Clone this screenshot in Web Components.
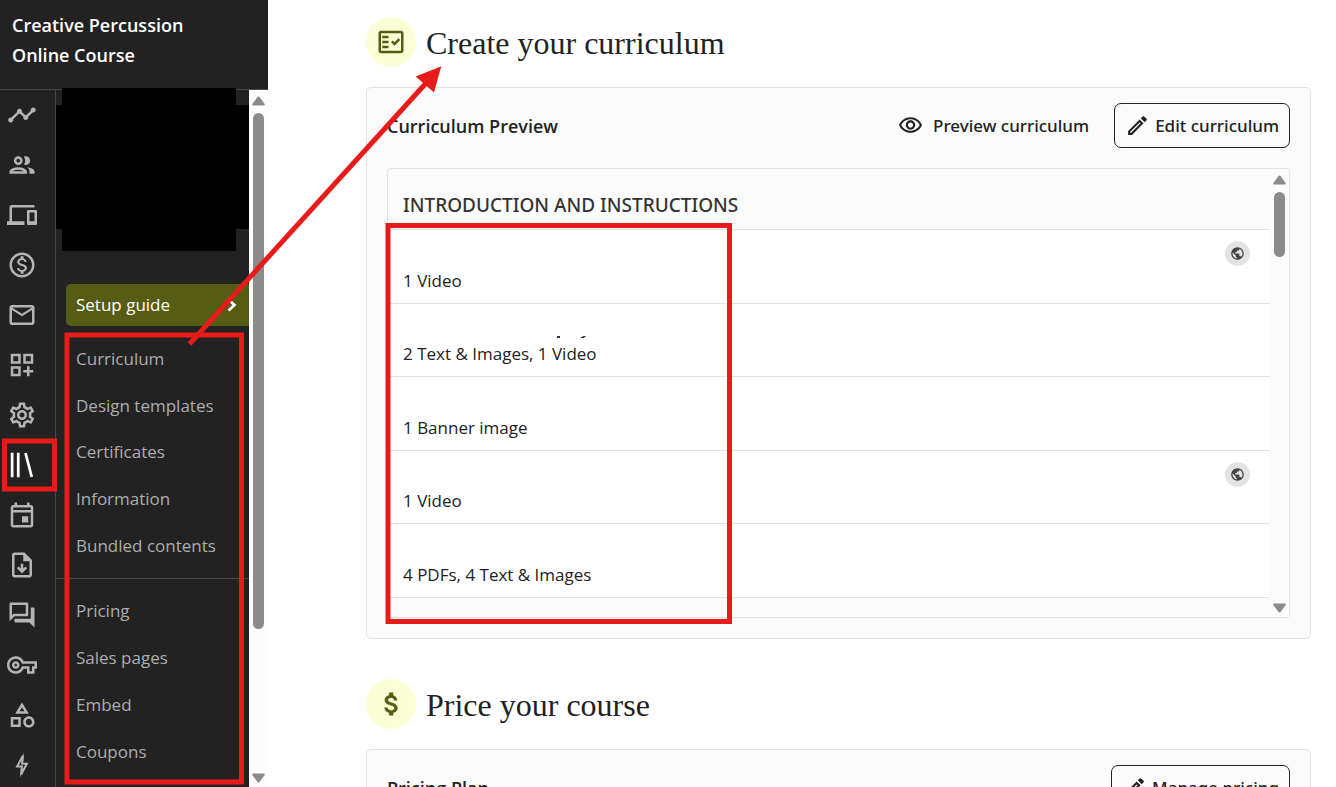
<!DOCTYPE html>
<html lang="en">
<head>
<meta charset="utf-8">
<meta name="viewport" content="width=device-width, initial-scale=1">
<title>Creative Percussion Online Course</title>
<style>
  body{
    margin: 0;
    background: #fff;
    color: #222;
    font-family: "Open Sans", "Noto Sans", sans-serif;
    font-size: 17px;
    line-height: 24px;
  }
</style>
</head>
<body>
<course-app>
  <course-sidebar slot="side" heading="Creative Percussion" subheading="Online Course"></course-sidebar>

  <setup-step icon="factCheck" heading="Create your curriculum">
    <setup-card heading="Curriculum Preview">
      <action-button slot="actions" icon="eye" plain>Preview curriculum</action-button>
      <action-button slot="actions" icon="pencil">Edit curriculum</action-button>
      <curriculum-list heading="INTRODUCTION AND INSTRUCTIONS">
        <curriculum-row public>1 Video</curriculum-row>
        <curriculum-row trace>2 Text &amp; Images, 1 Video</curriculum-row>
        <curriculum-row>1 Banner image</curriculum-row>
        <curriculum-row public>1 Video</curriculum-row>
        <curriculum-row>4 PDFs, 4 Text &amp; Images</curriculum-row>
      </curriculum-list>
    </setup-card>
  </setup-step>

  <setup-step icon="dollar" heading="Price your course">
    <setup-card heading="Pricing Plan">
      <action-button slot="actions" icon="pencil">Manage pricing</action-button>
    </setup-card>
  </setup-step>

  <markup-layer slot="overlay"></markup-layer>
</course-app>

<script>
const ICONS = {
  timeline: '<path d="M23 8c0 1.1-.9 2-2 2-.18 0-.35-.02-.51-.07l-3.56 3.55c.05.16.07.34.07.52 0 1.1-.9 2-2 2s-2-.9-2-2c0-.18.02-.36.07-.52l-2.55-2.55c-.16.05-.34.07-.52.07s-.36-.02-.52-.07l-4.55 4.56c.05.16.07.33.07.51 0 1.1-.9 2-2 2s-2-.9-2-2 .9-2 2-2c.18 0 .35.02.51.07l4.56-4.55C8.02 9.36 8 9.18 8 9c0-1.1.9-2 2-2s2 .9 2 2c0 .18-.02.36-.07.52l2.55 2.55c.16-.05.34-.07.52-.07s.36.02.52.07l3.55-3.56C19.02 8.35 19 8.18 19 8c0-1.1.9-2 2-2s2 .9 2 2z"/>',
  people: '<path d="M9 13.75c-2.34 0-7 1.17-7 3.5V19h14v-1.75c0-2.33-4.66-3.5-7-3.5zM4.34 17c.84-.58 2.87-1.25 4.66-1.25s3.82.67 4.66 1.25H4.34zM9 12c1.93 0 3.5-1.57 3.5-3.5S10.93 5 9 5 5.5 6.57 5.5 8.5 7.07 12 9 12zm0-5c.83 0 1.5.67 1.5 1.5S9.83 10 9 10s-1.5-.67-1.5-1.5S8.17 7 9 7zm7.04 6.81c1.16.84 1.96 1.96 1.96 3.44V19h4v-1.75c0-2.02-3.5-3.17-5.96-3.44zM15 12c1.93 0 3.5-1.57 3.5-3.5S16.93 5 15 5c-.54 0-1.04.13-1.5.35.63.89 1 1.98 1 3.15s-.37 2.26-1 3.15c.46.22.96.35 1.5.35z"/>',
  devices: '<path d="M4 6h18V4H4c-1.1 0-2 .9-2 2v11H0v3h14v-3H4V6zm19 2h-6c-.55 0-1 .45-1 1v10c0 .55.45 1 1 1h6c.55 0 1-.45 1-1V9c0-.55-.45-1-1-1zm-1 9h-4v-7h4v7z"/>',
  money: '<path d="M12 2C6.48 2 2 6.48 2 12s4.48 10 10 10 10-4.48 10-10S17.52 2 12 2zm0 18c-4.41 0-8-3.59-8-8s3.59-8 8-8 8 3.59 8 8-3.59 8-8 8zm.31-8.86c-1.77-.45-2.34-.94-2.34-1.67 0-.84.79-1.43 2.1-1.43 1.38 0 1.9.66 1.94 1.64h1.71c-.05-1.34-.87-2.57-2.49-2.97V5H10.9v1.69c-1.51.32-2.72 1.3-2.72 2.81 0 1.79 1.49 2.69 3.66 3.21 1.95.46 2.34 1.15 2.34 1.87 0 .53-.39 1.39-2.1 1.39-1.6 0-2.23-.72-2.32-1.64H8.04c.1 1.7 1.36 2.66 2.86 2.97V19h2.34v-1.67c1.52-.29 2.72-1.16 2.73-2.77-.01-2.2-1.9-2.96-3.66-3.42z"/>',
  mail: '<path d="M22 6c0-1.1-.9-2-2-2H4c-1.1 0-2 .9-2 2v12c0 1.1.9 2 2 2h16c1.1 0 2-.9 2-2V6zm-2 0l-8 5-8-5h16zm0 12H4V8l8 5 8-5v10z"/>',
  widgets: '<path d="M3 11h8V3H3v8zm2-6h4v4H5V5zm8-2v8h8V3h-8zm6 6h-4V5h4v4zM3 21h8v-8H3v8zm2-6h4v4H5v-4zm13-2h-2v3h-3v2h3v3h2v-3h3v-2h-3v-3z"/>',
  gear: '<path d="M19.43 12.98c.04-.32.07-.64.07-.98 0-.34-.03-.66-.07-.98l2.11-1.65c.19-.15.24-.42.12-.64l-2-3.46c-.09-.16-.26-.25-.44-.25-.06 0-.12.01-.17.03l-2.49 1c-.52-.4-1.08-.73-1.69-.98l-.38-2.65C14.46 2.18 14.25 2 14 2h-4c-.25 0-.46.18-.49.42l-.38 2.65c-.61.25-1.17.59-1.69.98l-2.49-1c-.06-.02-.12-.03-.18-.03-.17 0-.34.09-.43.25l-2 3.46c-.13.22-.07.49.12.64l2.11 1.65c-.04.32-.07.65-.07.98 0 .33.03.66.07.98l-2.11 1.65c-.19.15-.24.42-.12.64l2 3.46c.09.16.26.25.44.25.06 0 .12-.01.17-.03l2.49-1c.52.4 1.08.73 1.69.98l.38 2.65c.03.24.24.42.49.42h4c.25 0 .46-.18.49-.42l.38-2.65c.61-.25 1.17-.59 1.69-.98l2.49 1c.06.02.12.03.18.03.17 0 .34-.09.43-.25l2-3.46c.12-.22.07-.49-.12-.64l-2.11-1.65zm-1.98-1.71c.04.31.05.52.05.73 0 .21-.02.43-.05.73l-.14 1.13.89.7 1.08.84-.7 1.21-1.27-.51-1.04-.42-.9.68c-.43.32-.84.56-1.25.73l-1.06.43-.16 1.13-.2 1.35h-1.4l-.19-1.35-.16-1.13-1.06-.43c-.43-.18-.83-.41-1.23-.71l-.91-.7-1.06.43-1.27.51-.7-1.21 1.08-.84.89-.7-.14-1.13c-.03-.31-.05-.54-.05-.74s.02-.43.05-.73l.14-1.13-.89-.7-1.08-.84.7-1.21 1.27.51 1.04.42.9-.68c.43-.32.84-.56 1.25-.73l1.06-.43.16-1.13.2-1.35h1.39l.19 1.35.16 1.13 1.06.43c.43.18.83.41 1.23.71l.91.7 1.06-.43 1.27-.51.7 1.21-1.07.85-.89.7.14 1.13zM12 8c-2.21 0-4 1.79-4 4s1.79 4 4 4 4-1.79 4-4-1.79-4-4-4zm0 6c-1.1 0-2-.9-2-2s.9-2 2-2 2 .9 2 2-.9 2-2 2z"/>',
  library: '<path fill="none" stroke="currentColor" stroke-width="2.2" d="M4.1 2.200v19.600M9 2.200v19.600M14.800 2.400l5 19.200"/>',
  calendar: '<path d="M19 4h-1V2h-2v2H8V2H6v2H5c-1.11 0-1.99.9-1.99 2L3 20c0 1.1.89 2 2 2h14c1.1 0 2-.9 2-2V6c0-1.1-.9-2-2-2zm0 16H5V10h14v10zm0-12H5V6h14v2zm-7 5h5v5h-5v-5z"/>',
  download: '<path d="M14 2H6c-1.1 0-2 .9-2 2v16c0 1.1.9 2 2 2h12c1.1 0 2-.9 2-2V8l-6-6zM6 20V4h7v5h5v11H6z"/><path fill="none" stroke="currentColor" stroke-width="2" d="M12 11v6M8.6 13.9L12 17.3l3.4-3.4"/>',
  forum: '<path d="M15 4v7H5.17L4 12.17V4h11m1-2H3c-.55 0-1 .45-1 1v14l4-4h10c.55 0 1-.45 1-1V3c0-.55-.45-1-1-1zm5 4h-2v9H6v2c0 .55.45 1 1 1h11l4 4V7c0-.55-.45-1-1-1z"/>',
  key: '<path d="M22 19h-6v-4h-2.68c-1.14 2.42-3.6 4-6.32 4-3.86 0-7-3.14-7-7s3.14-7 7-7c2.72 0 5.17 1.58 6.32 4H24v6h-2v4zm-4-2h2v-4h2v-2H11.94l-.23-.67C11.01 8.34 9.11 7 7 7c-2.76 0-5 2.24-5 5s2.24 5 5 5c2.11 0 4.01-1.34 4.71-3.33l.23-.67H18v4zM7 15c-1.65 0-3-1.35-3-3s1.35-3 3-3 3 1.35 3 3-1.35 3-3 3zm0-4c-.55 0-1 .45-1 1s.45 1 1 1 1-.45 1-1-.45-1-1-1z"/>',
  shapes: '<path d="M12 2l-5.5 9h11L12 2zm0 3.84L13.93 9h-3.87L12 5.84zM17.5 13c-2.49 0-4.5 2.01-4.5 4.5s2.01 4.5 4.5 4.5 4.5-2.01 4.5-4.5-2.01-4.5-4.5-4.5zm0 7c-1.38 0-2.5-1.12-2.5-2.5s1.12-2.5 2.5-2.5 2.5 1.12 2.5 2.5-1.12 2.5-2.5 2.5zM3 21.5h8v-8H3v8zm2-6h4v4H5v-4z"/>',
  bolt: '<path fill="none" stroke="currentColor" stroke-width="1.6" d="M12.7 4.6L8.1 13.2h3.8l-.6 6.4 4.6-8.6h-3.8z"/><path d="M13.6 2l-1.6 4 .8 4zM10.4 22.2l1.7-4-.8-4z"/>',
  factCheck: '<path d="M20 3H4c-1.1 0-2 .9-2 2v14c0 1.1.9 2 2 2h16c1.1 0 2-.9 2-2V5c0-1.1-.9-2-2-2zm0 16H4V5h16v14z"/><path d="M19.41 10.42L17.99 9l-3.17 3.17-1.41-1.42L12 12.16 14.82 15zM5 7h5v2H5zM5 11h5v2H5zM5 15h5v2H5z"/>',
  dollar: '<path stroke="currentColor" stroke-width=".4" transform="translate(.6)" d="M11.8 10.9c-2.27-.59-3-1.2-3-2.15 0-1.09 1.01-1.85 2.7-1.85 1.78 0 2.44.85 2.5 2.1h2.21c-.07-1.72-1.12-3.3-3.21-3.81V3h-3v2.16c-1.94.42-3.5 1.68-3.5 3.61 0 2.31 1.91 3.46 4.7 4.13 2.5.6 3 1.48 3 2.41 0 .69-.49 1.79-2.7 1.79-2.06 0-2.87-.92-2.98-2.1h-2.2c.12 2.19 1.76 3.42 3.68 3.83V21h3v-2.15c1.95-.37 3.5-1.5 3.5-3.55 0-2.84-2.43-3.81-4.7-4.4z"/>',
  eye: '<path d="M12 6c3.79 0 7.17 2.13 8.82 5.5C19.17 14.87 15.79 17 12 17s-7.17-2.13-8.82-5.5C4.83 8.13 8.21 6 12 6m0-2C7 4 2.73 7.11 1 11.5 2.73 15.89 7 19 12 19s9.27-3.11 11-7.5C21.27 7.11 17 4 12 4zm0 5c1.38 0 2.5 1.12 2.5 2.5S13.38 14 12 14s-2.5-1.12-2.5-2.5S10.62 9 12 9m0-2c-2.48 0-4.5 2.02-4.5 4.5S9.52 16 12 16s4.5-2.02 4.5-4.5S14.48 7 12 7z"/>',
  pencil: '<path d="M14.06 9.02l.92.92L5.92 19H5v-.92l9.06-9.06M17.66 3c-.25 0-.51.1-.7.29l-1.83 1.83 3.75 3.75 1.83-1.83c.39-.39.39-1.02 0-1.41l-2.34-2.34c-.2-.2-.45-.29-.71-.29zm-3.6 3.19L3 17.25V21h3.75L17.81 9.94l-3.75-3.75z"/>',
  globe: '<path d="M12 2C6.48 2 2 6.48 2 12s4.48 10 10 10 10-4.48 10-10S17.52 2 12 2zm-1 17.93c-3.95-.49-7-3.85-7-7.93 0-.62.08-1.21.21-1.79L9 15v1c0 1.1.9 2 2 2v1.93zm6.9-2.54c-.26-.81-1-1.39-1.9-1.39h-1v-3c0-.55-.45-1-1-1H8v-2h2c.55 0 1-.45 1-1V7h2c1.1 0 2-.9 2-2v-.41c2.93 1.19 5 4.06 5 7.41 0 2.08-.8 3.97-2.1 5.39z"/>',
  chevron: '<path fill="none" stroke="currentColor" stroke-width="2.700" d="M8.500 6.500l6 5.500-6 5.500"/>'
}

class AppIcon extends HTMLElement {
  constructor(){
    super()
    this.attachShadow({mode: 'open'})
  }

  connectedCallback() {
    this.shadowRoot.innerHTML = `
      <style>
        :host{
          display: block;
          flex: none;
          width: var(--icon-size, 30px);
          height: var(--icon-size, 30px);
        }
        svg{
          display: block;
          width: 100%;
          height: 100%;
          fill: currentColor;
        }
      </style>
      <svg viewBox="0 0 24 24" aria-hidden="true">${ICONS[this.getAttribute('name')]}</svg>
    `
  }
}

class ScrollTrack extends HTMLElement {
  constructor(){
    super()
    this.attachShadow({mode: 'open'}).innerHTML = `
      <style>
        :host{
          display: flex;
          flex-direction: column;
          align-items: center;
          gap: 7px;
          flex: none;
          box-sizing: border-box;
          width: 19px;
          padding: 6px 0 4px;
          background: #fcfcfc;
          color: #8b8b8b;
        }
        svg{
          flex: none;
          width: 13px;
          height: 10px;
          fill: currentColor;
        }
        .track{
          flex: 1;
          width: 11px;
        }
        .thumb{
          height: var(--thumb, 50%);
          border-radius: 6px;
          background: currentColor;
        }
      </style>
      <svg viewBox="0 0 13 10" aria-hidden="true"><path d="M5.300 1.200q1.200-1.400 2.400 0l4.800 6.600q.8 1.700-.8 1.700H1.300q-1.600 0-.8-1.700z"/></svg>
      <div class="track"><div class="thumb"></div></div>
      <svg viewBox="0 0 13 10" aria-hidden="true"><path d="M5.300 8.800q1.200 1.400 2.400 0l4.800-6.600q.8-1.700-.8-1.700H1.300q-1.600 0-.8 1.700z"/></svg>
    `
  }
}

class SideRail extends HTMLElement {
  constructor(){
    super()
    const items = [
      ['timeline', 'Dashboard'], ['people', 'Users'], ['devices', 'Website'],
      ['money', 'Sales'], ['mail', 'Email'], ['widgets', 'Apps'],
      ['gear', 'Settings'], ['library', 'Products'], ['calendar', 'Events'],
      ['download', 'Downloads'], ['forum', 'Community'], ['key', 'Access'],
      ['shapes', 'Categories'], ['bolt', 'Automations']
    ]
    this.attachShadow({mode: 'open'}).innerHTML = `
      <style>
        :host{
          display: block;
          flex: none;
          box-sizing: border-box;
          width: 56px;
          border-right: 1px solid #484848;
          color: #b5b5b5;
        }
        a{
          display: flex;
          align-items: center;
          height: 50px;
          padding-left: 7px;
          color: inherit;
        }
        a[aria-current]{
          color: #fff;
        }
      </style>
      <nav aria-label="Main">
        ${items.map(([icon, label]) => `<a href="#${icon}" aria-label="${label}" ${icon === 'library' ? 'aria-current="page"' : ''}><app-icon name="${icon}"></app-icon></a>`).join('')}
      </nav>
    `
  }
}

class CourseNav extends HTMLElement {
  constructor(){
    super()
    const list = items => items.map(item => `<li><a href="#">${item}</a></li>`).join('')
    this.attachShadow({mode: 'open'}).innerHTML = `
      <style>
        :host{
          display: block;
          flex: 1;
          color: #adadad;
        }
        .cover{
          position: relative;
          height: 124px;
          margin: 15px 0 55px;
          background: #000;
        }
        .cover::after{
          content: "";
          position: absolute;
          inset: -17px 13px -22px 6px;
          background: #000;
        }
        a{
          color: inherit;
          text-decoration: none;
        }
        .current{
          display: flex;
          align-items: center;
          justify-content: space-between;
          height: 42px;
          margin: 0 0 10px 10px;
          padding: 0 5px 0 10px;
          border-radius: 5px 0 0 5px;
          background: #565c14;
          color: #fff;
          --icon-size: 24px;
        }
        ul{
          display: grid;
          grid-auto-rows: 1fr;
          align-items: center;
          margin: 0;
          padding: 0 0 0 20px;
          list-style: none;
        }
        .build{
          min-height: 233px;
        }
        .sell{
          min-height: 187px;
        }
        hr{
          margin: 9px 0;
          border: 0;
          border-top: 1px solid #484848;
        }
      </style>
      <div class="cover"></div>
      <nav aria-label="Course">
        <a class="current" href="#setup">Setup guide<app-icon name="chevron"></app-icon></a>
        <ul class="build">${list(['Curriculum', 'Design templates', 'Certificates', 'Information', 'Bundled contents'])}</ul>
        <hr>
        <ul class="sell">${list(['Pricing', 'Sales pages', 'Embed', 'Coupons'])}</ul>
      </nav>
    `
  }
}

class CourseSidebar extends HTMLElement {
  constructor(){
    super()
    this.attachShadow({mode: 'open'})
  }

  connectedCallback() {
    this.shadowRoot.innerHTML = `
      <style>
        :host{
          display: flex;
          flex-direction: column;
          width: 268px;
          height: 100%;
          background: #222;
        }
        header{
          flex: none;
          padding: 10px 12px 19px;
          border-bottom: 1px solid #484848;
          color: #fff;
          font-size: 18px;
          font-weight: 600;
          line-height: 30px;
        }
        .columns{
          display: flex;
          flex: 1;
          min-height: 0;
        }
        scroll-track{
          --thumb: 79%;
        }
      </style>
      <header>${this.getAttribute('heading')}<br>${this.getAttribute('subheading')}</header>
      <div class="columns">
        <side-rail></side-rail>
        <course-nav></course-nav>
        <scroll-track></scroll-track>
      </div>
    `
  }
}

class SetupStep extends HTMLElement {
  constructor(){
    super()
    this.attachShadow({mode: 'open'})
  }

  connectedCallback() {
    this.shadowRoot.innerHTML = `
      <style>
        :host{
          display: block;
        }
        header{
          display: flex;
          align-items: center;
          gap: 10px;
          height: 50px;
          margin-bottom: 20px;
        }
        .badge{
          display: grid;
          place-items: center;
          width: 50px;
          height: 50px;
          border-radius: 50%;
          background: #faffd6;
          color: #565c14;
        }
        h2{
          margin: 0;
          padding-top: 2px;
          font: 400 32px/50px "Liberation Serif", serif;
        }
      </style>
      <section>
        <header>
          <span class="badge"><app-icon name="${this.getAttribute('icon')}"></app-icon></span>
          <h2>${this.getAttribute('heading')}</h2>
        </header>
        <slot></slot>
      </section>
    `
  }
}

class SetupCard extends HTMLElement {
  constructor(){
    super()
    this.attachShadow({mode: 'open'})
  }

  connectedCallback() {
    this.shadowRoot.innerHTML = `
      <style>
        :host{
          display: block;
          padding: 15px 20px 20px;
          border: 1px solid #e3e3e3;
          border-radius: 5px;
          background: #fbfbfb;
        }
        header{
          display: flex;
          align-items: center;
          gap: 24px;
          margin-bottom: 20px;
        }
        h3{
          flex: 1;
          margin: 0;
          font-size: 18px;
          font-weight: 600;
        }
      </style>
      <header>
        <h3>${this.getAttribute('heading')}</h3>
        <slot name="actions"></slot>
      </header>
      <slot></slot>
    `
  }
}

class ActionButton extends HTMLElement {
  constructor(){
    super()
    this.attachShadow({mode: 'open'})
  }

  connectedCallback() {
    this.shadowRoot.innerHTML = `
      <style>
        :host{
          display: block;
          --icon-size: 25px;
        }
        button{
          display: flex;
          align-items: center;
          gap: 5px;
          height: 45px;
          padding: 0 10px;
          border: 1px solid #222;
          border-radius: 7px;
          background: none;
          color: inherit;
          font: 500 17px/24px "Noto Sans", sans-serif;
          white-space: nowrap;
        }
        :host([plain]) button{
          gap: 10px;
          padding: 0;
          border-color: transparent;
        }
      </style>
      <button type="button"><app-icon name="${this.getAttribute('icon')}"></app-icon><span><slot></slot></span></button>
    `
  }
}

class CurriculumList extends HTMLElement {
  constructor(){
    super()
    this.attachShadow({mode: 'open'})
  }

  connectedCallback() {
    this.shadowRoot.innerHTML = `
      <style>
        :host{
          display: flex;
          border: 1px solid #e3e3e3;
          border-radius: 4px;
          overflow: hidden;
        }
        .body{
          flex: 1;
          padding-bottom: 19px;
        }
        h4{
          margin: 0;
          padding: 24px 15px 12px;
          border-bottom: 1px solid #e3e3e3;
          color: #333;
          font: 500 19px/24px "Noto Sans", sans-serif;
        }
        .rows{
          display: grid;
          grid-auto-rows: 1fr;
          min-height: 368px;
        }
        scroll-track{
          --thumb: 16%;
        }
      </style>
      <div class="body">
        <h4>${this.getAttribute('heading')}</h4>
        <div class="rows" role="list"><slot></slot></div>
      </div>
      <scroll-track></scroll-track>
    `
  }
}

class CurriculumRow extends HTMLElement {
  constructor(){
    super()
    this.attachShadow({mode: 'open'})
  }

  connectedCallback() {
    this.setAttribute('role', 'listitem')
    this.shadowRoot.innerHTML = `
      <style>
        :host{
          display: flex;
          justify-content: space-between;
          padding: 11px 20px 10px 15px;
          border-bottom: 1px solid #e3e3e3;
          background: #fff;
          --icon-size: 15px;
        }
        .detail{
          position: relative;
          align-self: flex-end;
        }
        .trace{
          position: absolute;
          top: -6px;
          left: 154px;
          width: 32px;
          height: 3px;
        }
        .status{
          display: grid;
          place-items: center;
          width: 25px;
          height: 25px;
          border-radius: 50%;
          background: #e3e3e3;
          color: #444;
        }
      </style>
      <span class="detail">
        <slot></slot>
        ${this.hasAttribute('trace') ? '<svg class="trace" viewBox="0 0 32 3" fill="#333" aria-hidden="true"><path d="M0 0h3v2H0zM24 1l3-1h2l-2 2h-3z"/></svg>' : ''}
      </span>
      ${this.hasAttribute('public') ? '<span class="status"><app-icon name="globe"></app-icon></span>' : ''}
    `
  }
}

// Red boxes and pointer arrow drawn over the page
class MarkupLayer extends HTMLElement {
  constructor(){
    super()
    this.attachShadow({mode: 'open'}).innerHTML = `
      <style>
        :host{
          position: absolute;
          inset: 0;
          overflow: hidden;
          pointer-events: none;
        }
        svg{
          display: block;
          overflow: visible;
        }
      </style>
      <svg width="1" height="1" fill="none" stroke="#e81b1b" stroke-width="5" aria-hidden="true">
        <rect x="67" y="335" width="174.500" height="447"/>
        <rect x="4.500" y="441" width="50" height="48"/>
        <rect x="388" y="225.500" width="341.500" height="396"/>
        <path d="M189.500 344L427 82"/>
        <path fill="#e81b1b" stroke="none" d="M441.300 66.300L415.700 76.500 434 92.500z"/>
      </svg>
    `
  }
}

class CourseApp extends HTMLElement {
  constructor(){
    super()
    this.attachShadow({mode: 'open'}).innerHTML = `
      <style>
        :host{
          display: grid;
          grid-template-columns: auto 1fr;
          position: relative;
          height: 100vh;
          overflow: hidden;
        }
        aside{
          min-height: 0;
          overflow: hidden;
        }
        main{
          display: flex;
          flex-direction: column;
          gap: 40px;
          min-width: 0;
          min-height: 0;
          overflow: hidden;
          padding: 17px 25px 0 98px;
        }
      </style>
      <aside><slot name="side"></slot></aside>
      <main><slot></slot></main>
      <slot name="overlay"></slot>
    `
  }
}

window.customElements.define('app-icon', AppIcon)
window.customElements.define('scroll-track', ScrollTrack)
window.customElements.define('side-rail', SideRail)
window.customElements.define('course-nav', CourseNav)
window.customElements.define('course-sidebar', CourseSidebar)
window.customElements.define('setup-step', SetupStep)
window.customElements.define('setup-card', SetupCard)
window.customElements.define('action-button', ActionButton)
window.customElements.define('curriculum-list', CurriculumList)
window.customElements.define('curriculum-row', CurriculumRow)
window.customElements.define('markup-layer', MarkupLayer)
window.customElements.define('course-app', CourseApp)
</script>
</body>
</html>
